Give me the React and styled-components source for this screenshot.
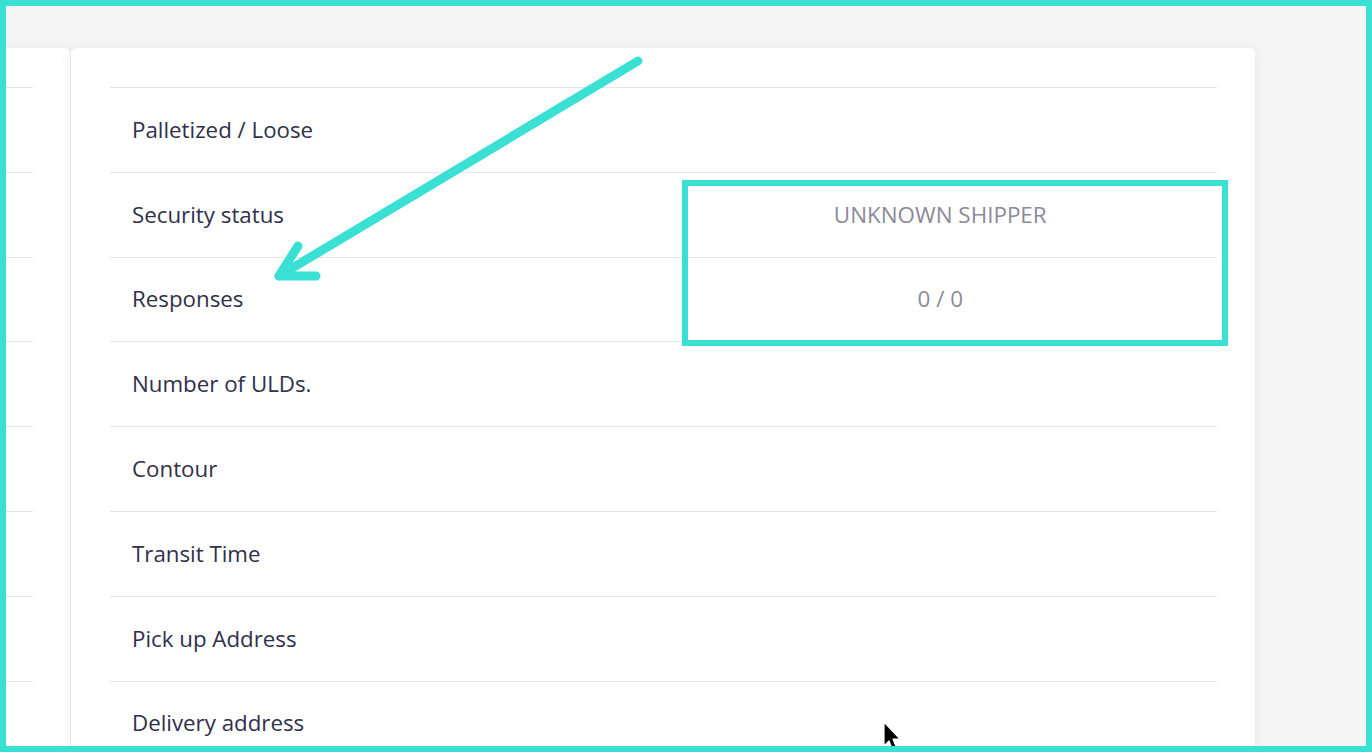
import styled, { createGlobalStyle } from "styled-components";

// ------------------ Data ------------------

const rows = [
  { label: "Palletized / Loose" },
  { label: "Security status", value: "UNKNOWN SHIPPER" },
  { label: "Responses", value: "0 / 0" },
  { label: "Number of ULDs." },
  { label: "Contour" },
  { label: "Transit Time" },
  { label: "Pick up Address" },
  { label: "Delivery address" },
  { label: "" },
];

const TEAL = "#3ae0d4";

// ------------------ Styled Components ------------------

const GlobalStyle = createGlobalStyle`
  html, body {
    margin: 0;
    padding: 0;
    background: #f5f5f5;
  }
  * { box-sizing: border-box; }
`;

const Frame = styled.div`
  position: relative;
  width: 1372px;
  height: 752px;
  border: 6px solid ${TEAL};
  background: #f5f5f5;
  overflow: hidden;
  font-family: "Open Sans", "Noto Sans", sans-serif;
`;

const Board = styled.div`
  display: flex;
  gap: 1px;
  padding-top: 42px;
  align-items: flex-start;
`;

const Card = styled.section`
  background: #fff;
  border-radius: ${({ $side }) => ($side ? "0 6px 0 0" : "6px 6px 0 0")};
  box-shadow: 0 2px 14px rgba(20, 20, 40, 0.07);
  padding: 39px ${({ $side }) => ($side ? "37px 0 0" : "38px 0 39px")};
  width: ${({ $side }) => ($side ? "64px" : "1184px")};
  flex-shrink: 0;
  height: 800px;
`;

const Row = styled.div`
  display: grid;
  grid-template-columns: 1fr 1fr;
  align-items: center;
  height: 84.8px;
  padding-bottom: 1px;
  border-top: 1px solid #e4e4ea;
`;

const Label = styled.span`
  padding-left: 22px;
  font-size: 22.3px;
  color: #30304a;
`;

const Value = styled.span`
  text-align: center;
  font-size: 22.4px;
  color: #8b8a99;
`;

const Highlight = styled.div`
  position: absolute;
  left: 676px;
  top: 174px;
  width: 546px;
  height: 166px;
  border: 6px solid ${TEAL};
  pointer-events: none;
`;

const Overlay = styled.svg`
  position: absolute;
  left: -6px;
  top: -6px;
  pointer-events: none;
`;

// ------------------ Componente ------------------

export default function App() {
  return (
    <>
      <GlobalStyle />
      <Frame>
        <Board>
          <Card $side>
            {rows.map((r, i) => (
              <Row key={i} />
            ))}
          </Card>
          <Card>
            {rows.map((r, i) => (
              <Row key={i}>
                <Label>{r.label}</Label>
                {r.value && <Value>{r.value}</Value>}
              </Row>
            ))}
          </Card>
        </Board>

        <Highlight />

        <Overlay width="1372" height="752" viewBox="0 0 1372 752">
          <g
            stroke={TEAL}
            strokeWidth="9"
            strokeLinecap="round"
            strokeLinejoin="round"
            fill="none"
          >
            <path d="M638 61 L279 276" />
            <path d="M298 246 L279 276 L316 276" />
          </g>
          <path
            d="M884 722 L884 746 L889 741 L893 751 L897 749 L893 739 L900 739 Z"
            fill="#000"
            stroke="#fff"
            strokeWidth="1.2"
            strokeLinejoin="round"
          />
        </Overlay>
      </Frame>
    </>
  );
}
